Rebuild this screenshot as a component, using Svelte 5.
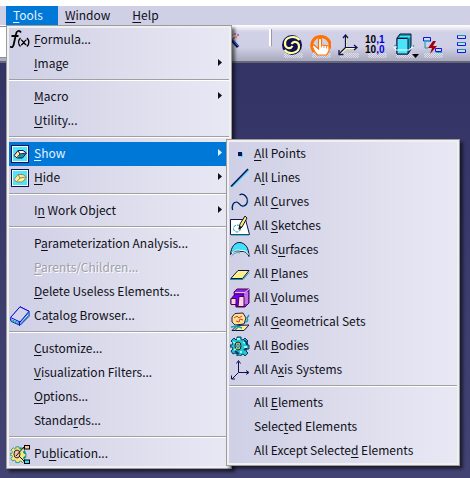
<script>
  const menubar = ['_Tools', '_Window', '_Help'];

  const tools = [
    { label: '_Formula...', icon: 'formula' },
    { label: '_Image', more: true },
    null,
    { label: '_Macro', more: true },
    { label: '_Utility...' },
    null,
    { label: '_Show', icon: 'show', more: true, open: true },
    { label: '_Hide', icon: 'hide', more: true },
    null,
    { label: 'I_n Work Object', more: true },
    null,
    { label: 'P_arameterization Analysis...' },
    { label: '_Parents/Children...', disabled: true },
    { label: '_Delete Useless Elements...' },
    { label: 'Ca_talog Browser...', icon: 'catalog' },
    null,
    { label: '_Customize...' },
    { label: '_Visualization Filters...' },
    { label: '_Options...' },
    { label: 'Standa_rds...' },
    null,
    { label: 'Pu_blication...', icon: 'publication' }
  ];

  const show = [
    { label: '_All Points', icon: 'point' },
    { label: 'A_ll Lines', icon: 'line' },
    { label: 'All _Curves', icon: 'curve' },
    { label: 'All _Sketches', icon: 'sketch' },
    { label: 'All S_urfaces', icon: 'surface' },
    { label: 'All _Planes', icon: 'plane' },
    { label: 'All _Volumes', icon: 'volume' },
    { label: 'All _Geometrical Sets', icon: 'geoset' },
    { label: 'All _Bodies', icon: 'body' },
    { label: 'All A_xis Systems', icon: 'axis' },
    null,
    { label: 'All _Elements' },
    { label: 'Selec_ted Elements' },
    { label: 'All Except Selecte_d Elements' }
  ];

  const toolbar = [
    { name: 'Update all', icon: 'swirl' },
    { name: 'Manual update', icon: 'hand' },
    { name: 'Axis system', icon: 'axes' },
    { name: 'Mean dimensions', icon: 'dims' },
    { name: 'Create datum', icon: 'box' },
    { name: 'Only current body', icon: 'link' },
    { name: 'Tree', icon: 'tree' }
  ];
</script>

{#snippet text(label)}
  {@const i = label.indexOf('_')}
  <span class="label">{label.slice(0, i)}<u>{label[i + 1]}</u>{label.slice(i + 2)}</span>
{/snippet}

{#snippet gear(body, edge)}
  <path d="M7 1h4v2l2 1 2-2 3 3-2 2 1 2h2v4h-2l-1 2 2 2-3 3-2-2-2 1v1H7v-2l-2-1-2 1-2-3 2-2-1-2H0V9h2l1-2-2-2 3-3 2 2 1-1z" fill={body} stroke={edge} />
{/snippet}

{#snippet glyph(name)}
  <svg class="glyph" width="20" height="20" viewBox="0 0 20 20" aria-hidden="true" fill="none">
    {#if name === 'formula'}
      <path d="M11 2.500C9.500 0 6.500 .5 6 4L3.800 14C3.300 17 2 18 0 16.500M1.500 6h7" stroke="#000" stroke-width="1.800" />
      <path d="M10.500 8c-2.500 2.500-2.500 6 0 8.500M17 8c2.500 2.500 2.500 6 0 8.500" stroke="#000" stroke-width="1.400" />
      <path d="M11 9.800c2 0 3 5 5.500 5M16.500 9.800c-2 0-3 5-5.500 5" stroke="#000" stroke-width="1.300" />
    {:else if name === 'show' || name === 'hide'}
      <rect x="1.500" y="1.500" width="17" height="17" fill="#fff" stroke="#101050" />
      <rect x="3" y="3" width="14" height="14" fill="#4ce6ff" />
      <path d="m4 11.500 4-5h5l3.500 2.500-4 5H7z" fill={name === 'show' ? '#fff' : '#f5e98c'} />
      <path d="m4 11 4-4.500 1.500 3L7 13.500z" fill="#fff08a" />
      <path d="m9.500 10.500 6.500-1-3.500 4.500H8z" fill={name === 'show' ? '#139999' : '#fff08a'} />
      <path d="m4 11.500 4-5h5l3.500 2.500-4 5H7zM7 13.500l3-3.500 6-1M8 6.500l2 3.500" stroke={name === 'show' ? '#101050' : '#8b8b74'} />
    {:else if name === 'catalog'}
      <path d="M.5 12.500 10 .8l9 4.500v5L10 19.300l-9-4z" fill="#fff" stroke="#0000e0" />
      <path d="M1 13.500 9.500 17 19 7M1 14.700l8.500 3.500L19 9" stroke="#109ca0" />
      <path d="M.5 11.500 10 .8l9 4.500-9 10.700z" fill="#d3d3ea" stroke="#0000e0" />
      <path d="M9.500 15.500v4" stroke="#0000e0" />
    {:else if name === 'publication'}
      <g transform="translate(0 2) scale(.83)">
        <path d="M12 2.500 16 5l2 4v4l-5 5" stroke="#108f94" stroke-width="3" />
        {@render gear('#f8e878', '#108f94')}
      </g>
      <ellipse cx="7" cy="10" rx="3" ry="4" fill="#ffc090" stroke="#202050" />
      <path d="m6 12 8-9M9 12l5 5" stroke="#101030" />
      <rect x="14.500" y="1.500" width="5" height="3.500" fill="#ffc0a0" stroke="#000" />
      <rect x="14.500" y="16" width="5" height="3.500" fill="#30e0ff" stroke="#000" />
    {:else if name === 'point'}
      <path d="M9 9h4v4H9z" fill="#46def8" />
      <path d="M8 8h4v4H8z" fill="#101058" />
    {:else if name === 'line'}
      <path d="M2 19 19 2" stroke="#46def8" stroke-width="1.500" />
      <path d="M1 18.500 18 1" stroke="#101058" stroke-width="1.600" />
    {:else if name === 'curve'}
      <path d="M3 18.500c-1-5 1-8 4-8s3 5 7 4c5-1 5-8 2-10.500-2-2-4-2.500-6-1" stroke="#46def8" />
      <path d="M2.500 18c-1-5 1-8 4-8s3 5 7 4c4.500-1 5-7 2-10-2-2-4-2.500-6-1" stroke="#101058" stroke-width="1.200" />
    {:else if name === 'sketch'}
      <path d="M.5 3.500h15l4 15H.5z" fill="#fff" stroke="#101050" />
      <path d="M1 19h18" stroke="#139999" />
      <circle cx="7" cy="12.500" r="3.500" stroke="#139999" stroke-dasharray="3 1" />
      <path d="m9 13 1-5 5-8 2 2-5 9z" fill="#ffea80" stroke="#101030" />
      <path d="m8.500 14 1-4 3 1z" fill="#101030" />
    {:else if name === 'surface'}
      <path d="M.5 14.500C1 7 5 2 10 2.500c5 .5 9 5 9 14-1.500-4-5-5.500-8-5-4-1.500-8-.5-10.500 3z" fill="#40e0fa" stroke="#101030" />
      <path d="M2 13C5 10 8 9.500 10.500 10.500c4-.5 6.500 1 8 4" stroke="#fff" />
      <path d="M1.500 16C5 12.500 7 12 10 13" stroke="#139999" stroke-width=".7" />
    {:else if name === 'plane'}
      <path d="M.8 14.500 8 6.500h11l-6.500 8z" fill="#fff08c" stroke="#101050" />
      <path d="M0 15.500h13l6-7" stroke="#139999" />
    {:else if name === 'volume'}
      <path d="m4 4 3-3h12v14l-4 4H6z" fill="#8a2be2" stroke="#4a0050" />
      <path d="M5 4.500h10V16M15 4.500 19 1M17 4v12" stroke="#f0b5ee" />
      <path d="M1 11 5 6h9l-2 4v8H7l-1-2H1z" fill="#6d00ff" stroke="#4a0050" />
      <path d="M1 10.500h5v6H1zM9 8.500h5v10H8z" fill="#ffd1e9" stroke="#4a0050" />
    {:else if name === 'geoset'}
      <path d="M2 5 5 1.500 13 1l3 5-2 6-9 1-3-3z" fill="#ffe08c" stroke="#262050" />
      <path d="m4 6 3-2 2 2 3-2M6 9l3 1 1-3 3 1" stroke="#d5382c" />
      <path d="m2 18.500 5-5 12-.5-5 5.500z" fill="#ffef90" stroke="#101050" />
      <path d="m1 15 6-1 5 2M15 10c3 0 3-2 2-4l2-3M9 14l-4 4" stroke="#139dad" stroke-width="1.500" />
    {:else if name === 'body'}
      {@render gear('#22c4cc', '#073b66')}
      <path d="M14 4.500 17 7v2M14 14l3-2M5 15l4 3" stroke="#123060" stroke-width="2" />
      <ellipse cx="8" cy="10" rx="3" ry="4" fill="#ffee45" stroke="#101050" />
      <ellipse cx="8" cy="10" rx="1.300" ry="2.300" fill="#3adff0" stroke="#104080" stroke-width=".7" />
      <path d="m3 6 2 1M7 3h3M13 6l2 1M14 11h3M4 14l2-1M10 16h2" stroke="#8cffff" stroke-width="1.800" />
    {:else if name === 'axis'}
      <path d="M8.500 1.500v11H18M8.500 12.500 2 19" stroke="#101050" />
      <path d="m6.500 3.500 2-3 2 3M16 10.500l3 2-3 2M1.500 15.500v3.500H5" stroke="#101050" />
    {/if}
  </svg>
{/snippet}

{#snippet menuItem(item)}
  {#if item}
    <li role="none">
      <button class="item" class:open={item.open} role="menuitem" disabled={item.disabled} aria-haspopup={item.more ? 'menu' : undefined}>
        {@render glyph(item.icon)}
        {@render text(item.label)}
        {#if item.more}
          <svg class="more" width="4" height="7" viewBox="0 0 4 7" aria-hidden="true"><path d="M0 0v7l4-3.500z" fill="currentColor" /></svg>
        {/if}
      </button>
      {#if item.open}
        <ul class="menu sub" role="menu">
          {#each show as entry}{@render menuItem(entry)}{/each}
        </ul>
      {/if}
    </li>
  {:else}
    <li class="rule" role="separator"></li>
  {/if}
{/snippet}

{#snippet tool(name)}
  <svg width="22" height="28" viewBox="0 0 22 28" aria-hidden="true" fill="none">
    <defs>
      <pattern id="dots-{name}" width="2" height="2" patternUnits="userSpaceOnUse">
        <path d="M0 0h1v1H0zM1 1h1v1H1z" fill="#fff" opacity=".55" />
      </pattern>
    </defs>
    {#if name !== 'tree'}<path d="M3 20h19v5H3z" fill="url(#dots-{name})" />{/if}
    {#if name === 'swirl'}
      <circle cx="11" cy="12" r="10" fill="#101050" />
      <path d="M18.500 7C14 2 4 3.500 4 10.500c0 5 5.500 6 7.500 2.500M3.500 17C8 22 18 20.500 18 13.500c0-5-5.500-6-7.500-2.500" stroke="#ffffa0" stroke-width="2.200" />
    {:else if name === 'hand'}
      <path d="M5 19C0 12 4 3.500 11.500 3.500c7 0 11 6 9.500 12" stroke="#ff7200" stroke-width="3" />
      <path d="M8.500 22c-3-3-4.500-6-5.500-9l2-1 4.500 4V6.500c0-1.500 3-1.500 3 0V12l7.500 1v5l-2.500 4z" fill="#fff" stroke="#ff7200" stroke-width="1.200" />
      <path d="M12.500 12v2.500M15 12.500V15M17.500 13v2.500" stroke="#ff7200" stroke-width=".8" />
    {:else if name === 'axes'}
      <path d="M9 3v12h10M9 15l-6 6" stroke="#ffffa0" stroke-width="2" />
      <path d="M8.500 3v11.500H19M8.500 14.500 2 21" stroke="#101050" stroke-width="1.200" />
      <path d="m6 5 2.500-3L11 5M17 12l3 2.500-3 2.500M2 17v4.500h4.500" stroke="#101050" stroke-width="1.300" />
    {:else if name === 'dims'}
      <g class="dims"><text x="0" y="10">10<tspan class="blue">,1</tspan></text><text x="0" y="20">10<tspan class="blue">,0</tspan></text></g>
    {:else if name === 'box'}
      <path d="m4 5 3-4h11v15l-3 5H4z" fill="#129da8" stroke="#101040" />
      <path d="M4 5.500h11V21H4z" fill="#4be4fb" stroke="#101040" />
      <path d="M7 3.500h10l-2 2" stroke="#4be4fb" />
      <path d="M4 14H1l2 3h13l4-3h-2" stroke="#e7ffff" stroke-width="1.200" />
      <path d="m1 13 2-1M20 14l1-2" stroke="#139999" />
    {:else if name === 'link'}
      <path d="M4 8v7h3" stroke="#139999" />
      <path d="M2.500 4.500h7V8h-7zM14.500 15.500h6v3h-6z" fill="#cfd9ee" stroke="#1010e8" />
      <path d="M3 8.500h7M15 19.500h6" stroke="#14b5bd" />
      <path d="m12 8-5 7h4l-2 6 7-8h-4l3-5z" fill="#a00010" />
    {:else if name === 'tree'}
      <path d="M8.500 2.500h8v3h-8zM8.500 9.500h8v3h-8zM8.500 16.500h8v3h-8z" fill="#cfd9ee" stroke="#1010e8" />
      <path d="M9 2.500h8M9 9.500h8M9 16.500h8" stroke="#139999" />
    {/if}
  </svg>
{/snippet}

<div class="app">
  <nav>
    <ul class="menubar" role="menubar">
      {#each menubar as label, i}
        <li role="none">
          <button class="top" class:open={i === 0} role="menuitem">{@render text(label)}</button>
          {#if i === 0}
            <ul class="menu main" role="menu">
              {#each tools as item}{@render menuItem(item)}{/each}
            </ul>
          {/if}
        </li>
      {/each}
    </ul>
  </nav>

  <div class="toolbar" role="toolbar" aria-label="Tools">
    <input class="field" type="text" aria-label="Name" />
    <div class="tools">
      <button class="wand" aria-label="Wand">
        <svg width="10" height="16" viewBox="0 0 10 16" aria-hidden="true">
          <path d="m0 5 8 9" stroke="#101050" stroke-width="3" /><path d="m1 5 7 8" stroke="#4878f0" />
          <path d="M1 1h2v2H1zM5 3h2v2H5z" fill="#ff9a35" /><path d="M4 0h2v2H4zM7 1h2v2H7zM3 4h2v2H3z" fill="#bb70b4" />
        </svg>
      </button>
      <span class="grip"></span>
      {#each toolbar as entry}
        <button class="tool" aria-label={entry.name}>
          {@render tool(entry.icon)}
          {#if entry.icon === 'box'}<svg class="drop" width="7" height="4" viewBox="0 0 7 4" aria-hidden="true"><path d="M0 0h7L3.500 4z" /></svg>{/if}
        </button>
      {/each}
    </div>
  </div>
  <main></main>
</div>

<style>
  :global(body) {
    margin: 0;
  }
  .app {
    display: flex;
    flex-direction: column;
    min-height: 100vh;
    overflow: hidden;
    background: #fff;
    color: #101018;
    font: 12px/24px "Noto Sans CJK KR", "Noto Sans", sans-serif;
  }
  ul {
    margin: 0;
    padding: 0;
    list-style: none;
  }
  button {
    margin: 0;
    padding: 0;
    border: 0;
    background: none;
    color: inherit;
    font: inherit;
    text-align: left;
  }
  u {
    text-decoration-thickness: 1px;
    text-underline-offset: 2px;
    text-decoration-skip-ink: none;
  }
  .label {
    white-space: pre;
  }
  .menubar {
    display: flex;
    margin-top: 6px;
    padding-left: 6px;
    background: #cfcfe6;
  }
  .menubar > li,
  .menu > li {
    position: relative;
  }
  .top {
    display: block;
    height: 19px;
    padding: 0 15px 2px 7px;
    line-height: 17px;
  }
  .open {
    background: #0078d7;
    color: #e6f3ff;
  }
  .menu {
    position: absolute;
    z-index: 2;
    box-sizing: border-box;
    padding: 2px;
    border: 1px solid #9c9c9c;
    background: linear-gradient(90deg, #cfcfe6, #dcdcec 50%, #e8e8f5) content-box, #f0f0f0;
    box-shadow: 3px 3px 3px rgb(0 0 0 / 55%);
  }
  .main {
    top: 100%;
    left: 0;
    width: 226px;
  }
  .sub {
    top: -3px;
    left: calc(100% - 3px);
    width: 234px;
    color: #101018;
  }
  .item {
    display: flex;
    align-items: center;
    gap: 4px;
    width: 100%;
    height: 24px;
    padding: 0 7px 0 1px;
  }
  .item .label {
    padding-bottom: 2px;
  }
  .item:disabled {
    color: #a0a0a8;
    text-shadow: 1px 1px #fff;
  }
  .glyph {
    flex: none;
  }
  .more {
    margin: 0 0 3px auto;
  }
  .rule {
    height: 1px;
    margin: 3px 0 4px;
    border-top: 1px solid #a0a0a0;
    background: #fff;
  }
  .toolbar {
    display: flex;
    justify-content: space-between;
    height: 36px;
    background: linear-gradient(#fff, #d0d0e6 7px, #cfcfe6 22px, #a9a9bd);
    border-bottom: 2px solid #66667a;
  }
  .field {
    box-sizing: border-box;
    width: 120px;
    height: 32px;
    margin-top: 1px;
    border: 1px solid #8c8c98;
    border-left: 0;
    background: #fff;
  }
  .tools {
    display: flex;
    align-items: flex-start;
    gap: 6px;
    margin-right: -1px;
  }
  .wand {
    height: 16px;
    margin: 8px 23px 0 0;
  }
  .wand svg,
  .tool svg {
    display: block;
  }
  .grip {
    width: 2px;
    height: 17px;
    margin: 4px 3px 0 0;
    border-right: 1px solid #9898aa;
    background: #fff;
  }
  .tool {
    position: relative;
    width: 22px;
    height: 28px;
    margin-top: 8px;
  }
  .tool .drop {
    position: absolute;
    right: -4px;
    bottom: 3px;
  }
  .dims {
    fill: #000;
    font: bold 10px "Liberation Sans", sans-serif;
  }
  .blue {
    fill: #0000e0;
  }
  main {
    flex: 1;
    background: linear-gradient(#333366, #434373);
  }
</style>
